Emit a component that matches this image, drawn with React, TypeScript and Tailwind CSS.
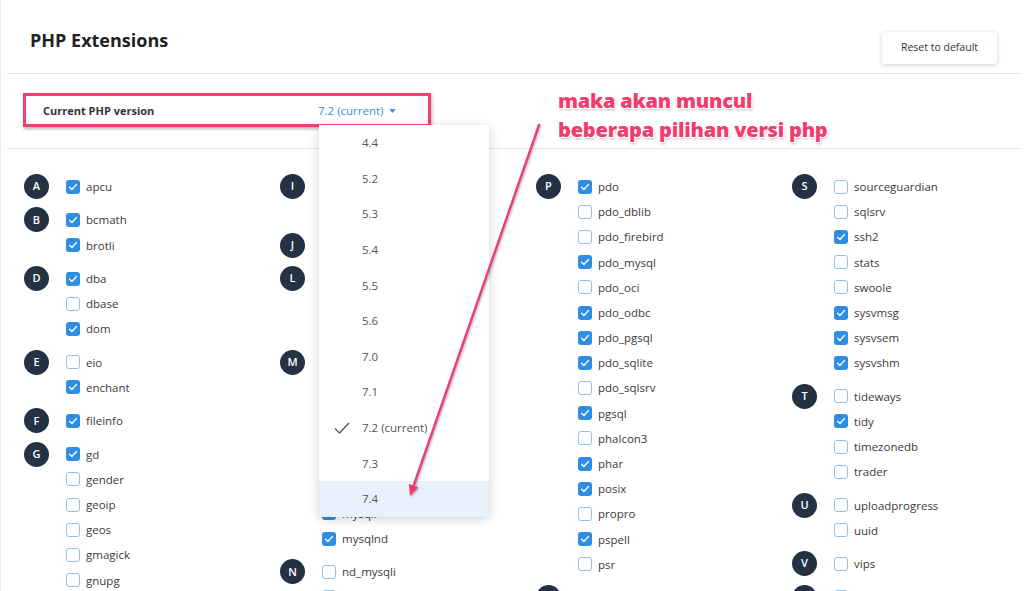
type Ext = { name: string; on?: boolean };
type Group = { letter: string; items: Ext[] };

const columns: Group[][] = [
  [
    { letter: "A", items: [{ name: "apcu", on: true }] },
    { letter: "B", items: [{ name: "bcmath", on: true }, { name: "brotli", on: true }] },
    { letter: "D", items: [{ name: "dba", on: true }, { name: "dbase" }, { name: "dom", on: true }] },
    { letter: "E", items: [{ name: "eio" }, { name: "enchant", on: true }] },
    { letter: "F", items: [{ name: "fileinfo", on: true }] },
    {
      letter: "G",
      items: [
        { name: "gd", on: true },
        { name: "gender" },
        { name: "geoip" },
        { name: "geos" },
        { name: "gmagick" },
        { name: "gnupg" },
        { name: "grpc" },
      ],
    },
  ],
  [
    { letter: "I", items: [{ name: "imagick", on: true }, { name: "imap", on: true }] },
    { letter: "J", items: [{ name: "json", on: true }] },
    { letter: "L", items: [{ name: "ldap" }, { name: "libsodium" }, { name: "lzf" }] },
    {
      letter: "M",
      items: [
        { name: "mailparse" },
        { name: "mbstring", on: true },
        { name: "mcrypt" },
        { name: "memcache" },
        { name: "memcached" },
        { name: "mongodb" },
        { name: "mysqli", on: true },
        { name: "mysqlnd", on: true },
      ],
    },
    { letter: "N", items: [{ name: "nd_mysqli" }, { name: "nd_pdo_mysql" }] },
  ],
  [
    {
      letter: "P",
      items: [
        { name: "pdo", on: true },
        { name: "pdo_dblib" },
        { name: "pdo_firebird" },
        { name: "pdo_mysql", on: true },
        { name: "pdo_oci" },
        { name: "pdo_odbc", on: true },
        { name: "pdo_pgsql", on: true },
        { name: "pdo_sqlite", on: true },
        { name: "pdo_sqlsrv" },
        { name: "pgsql", on: true },
        { name: "phalcon3" },
        { name: "phar", on: true },
        { name: "posix", on: true },
        { name: "propro" },
        { name: "pspell", on: true },
        { name: "psr" },
      ],
    },
    { letter: "R", items: [{ name: "raphf" }] },
  ],
  [
    {
      letter: "S",
      items: [
        { name: "sourceguardian" },
        { name: "sqlsrv" },
        { name: "ssh2", on: true },
        { name: "stats" },
        { name: "swoole" },
        { name: "sysvmsg", on: true },
        { name: "sysvsem", on: true },
        { name: "sysvshm", on: true },
      ],
    },
    {
      letter: "T",
      items: [{ name: "tideways" }, { name: "tidy", on: true }, { name: "timezonedb" }, { name: "trader" }],
    },
    { letter: "U", items: [{ name: "uploadprogress" }, { name: "uuid" }] },
    { letter: "V", items: [{ name: "vips" }] },
    { letter: "X", items: [{ name: "xdebug" }] },
  ],
];

const versions = ["4.4", "5.2", "5.3", "5.4", "5.5", "5.6", "7.0", "7.1", "7.2 (current)", "7.3", "7.4"];

function Checkbox({ on }: { on?: boolean }) {
  if (on) {
    return (
      <span className="flex h-[14px] w-[14px] shrink-0 items-center justify-center rounded-[3px] bg-[#2f8de4]">
        <svg viewBox="0 0 14 14" className="h-[14px] w-[14px]">
          <path d="M3.6 7.2l2.3 2.3 4.6-5" fill="none" stroke="white" strokeWidth="1.3" strokeLinecap="round" strokeLinejoin="round" />
        </svg>
      </span>
    );
  }
  return <span className="h-[14px] w-[14px] shrink-0 rounded-[3px] border-[1.5px] border-[#8ec1ef] bg-white" />;
}

function GroupBlock({ group }: { group: Group }) {
  return (
    <div className="flex items-start">
      <div className="flex h-[25px] w-[25px] shrink-0 items-center justify-center rounded-full bg-[#243243] text-[11px] font-semibold text-white">
        {group.letter}
      </div>
      <div className="ml-[17px] flex flex-col">
        {group.items.map((ext) => (
          <label key={ext.name} className="flex h-[25.2px] items-center gap-[6px] text-[11.5px] text-[#3a3a3a]">
            <Checkbox on={ext.on} />
            {ext.name}
          </label>
        ))}
      </div>
    </div>
  );
}

export default function App() {
  return (
    <div className="relative h-[591px] w-[1024px] overflow-hidden border-l border-[#ececec] bg-white font-['Open_Sans',sans-serif] text-[#2b2b2b]">
      <header className="ml-[6px] mr-[3px] flex h-[74px] items-start justify-between border-b border-[#e6e6e6]">
        <h1 className="ml-[23px] mt-[28px] text-[18px] font-bold leading-[24px] text-[#222]">PHP Extensions</h1>
        <button className="mr-[24px] mt-[32px] h-[32px] w-[115px] rounded-[3px] bg-white text-[10.5px] text-[#333] shadow-[0_1px_4px_rgba(0,0,0,0.2)]">
          Reset to default
        </button>
      </header>

      <section className="ml-[6px] mr-[3px] h-[75px] border-b border-[#e6e6e6] pl-[16px] pt-[19px]">
        <div className="flex h-[34px] w-[408px] items-center border-[3px] border-[#f0406d] bg-white pl-[17px] pt-[2px] shadow-[1px_2px_3px_rgba(0,0,0,0.3)]">
          <span className="w-[275px] text-[11px] font-bold text-[#333]">Current PHP version</span>
          <span className="flex items-center gap-[5px] text-[11.5px] text-[#3b8fe2]">
            7.2 (current)
            <svg viewBox="0 0 8 5" className="h-[4px] w-[7px]">
              <path d="M0 0h8L4 5z" fill="#3b8fe2" />
            </svg>
          </span>
        </div>
      </section>

      <main className="grid grid-cols-[repeat(4,256px)] pl-[23px] pt-[25px]">
        {columns.map((col, i) => (
          <div key={i} className="flex flex-col gap-[8.2px]">
            {col.map((g) => (
              <GroupBlock key={g.letter} group={g} />
            ))}
          </div>
        ))}
      </main>

      <ul className="absolute left-[318px] top-[125px] w-[170px] bg-white shadow-[0_2px_10px_rgba(0,0,0,0.18)]">
        {versions.map((v) => (
          <li
            key={v}
            className={`relative flex h-[35.6px] items-center pl-[43px] text-[11.5px] text-[#555] ${v === "7.4" ? "bg-[#e7f1fb]" : ""}`}
          >
            {v === "7.2 (current)" && (
              <svg viewBox="0 0 16 12" className="absolute left-[15px] h-[12px] w-[16px]">
                <path d="M1 6.5l4.5 4.5L15 1" fill="none" stroke="#555" strokeWidth="1.3" />
              </svg>
            )}
            {v}
          </li>
        ))}
      </ul>

      <div className="absolute left-[557px] top-[86px] font-['Open_Sans',sans-serif] text-[20px] font-extrabold leading-[29px] tracking-[-0.2px] text-[#f23c6d] [text-shadow:1px_1px_0_#fff,-1px_-1px_0_#fff,1px_-1px_0_#fff,-1px_1px_0_#fff,1px_2px_3px_rgba(0,0,0,0.3)]">
        <p>maka akan muncul</p>
        <p>beberapa pilihan versi php</p>
      </div>

      <svg className="pointer-events-none absolute left-0 top-0 h-[591px] w-[1024px] drop-shadow-[1px_1px_1px_rgba(0,0,0,0.3)]" viewBox="0 0 1024 591">
        <line x1="538" y1="125" x2="411.5" y2="489" stroke="#f23c6d" strokeWidth="2.4" strokeLinecap="round" />
        <polygon points="409,496 417.4,487.3 407.9,484" fill="#f23c6d" />
      </svg>
    </div>
  );
}
